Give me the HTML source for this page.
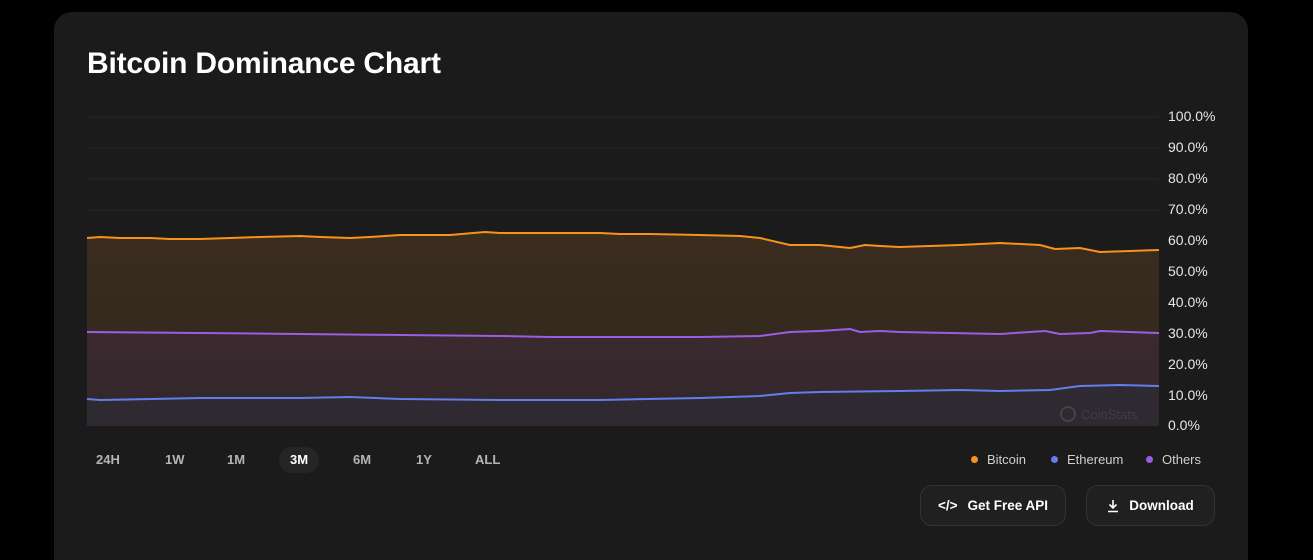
<!DOCTYPE html>
<html><head><meta charset="utf-8"><style>
html,body{margin:0;background:#000;width:1313px;height:560px;overflow:hidden;font-family:"Liberation Sans",sans-serif;}
.card{position:absolute;left:54px;top:12px;width:1194px;height:548px;background:#1b1b1b;border-radius:18px 18px 0 0;}
h1{position:absolute;left:87px;top:47px;margin:0;color:#fff;font-size:30px;font-weight:bold;letter-spacing:-0.2px;}
.yl{position:absolute;left:1168px;color:#e6e6e6;font-size:14px;}
.tf{position:absolute;top:452px;color:#b5b5b5;font-size:13px;font-weight:bold;}
.leg{position:absolute;top:452px;color:#cfcfcf;font-size:13px;}
.dot{display:inline-block;width:7px;height:7px;border-radius:50%;margin-right:9px;vertical-align:1px;}
.btn{position:absolute;top:485px;height:41px;border:1px solid #333;border-radius:12px;background:#202020;color:#fff;font-size:14px;font-weight:bold;display:flex;align-items:center;justify-content:center;box-sizing:border-box;}
</style></head><body>
<div class="card"></div>
<h1>Bitcoin Dominance Chart</h1>
<svg width="1313" height="560" style="position:absolute;left:0;top:0">
<defs>
<linearGradient id="gb" x1="0" y1="0" x2="0" y2="1"><stop offset="0" stop-color="#3a2d1e"/><stop offset="1" stop-color="#30261e"/></linearGradient>
<linearGradient id="go" x1="0" y1="0" x2="0" y2="1"><stop offset="0" stop-color="#3b2a2f"/><stop offset="1" stop-color="#32262b"/></linearGradient>
</defs>
<g stroke="#252525" stroke-width="1">
<line x1="87" y1="117" x2="1159" y2="117"/><line x1="87" y1="148" x2="1159" y2="148"/><line x1="87" y1="179" x2="1159" y2="179"/><line x1="87" y1="210" x2="1159" y2="210"/>
</g>
<polygon fill="url(#gb)" points="87,238 100,237 120,238 150,238 170,239 200,239 230,238 260,237 300,236 320,237 350,238 370,237 400,235 450,235 485,232 500,233 550,233 600,233 620,234 650,234 700,235 740,236 760,238 790,245 820,245 850,248 865,245 880,246 900,247 960,245 1000,243 1040,245 1055,249 1080,248 1100,252 1130,251 1159,250 1159,426 87,426"/>
<polygon fill="url(#go)" points="87,332 200,333 300,334 400,335 500,336 550,337 700,337 760,336 790,332 820,331 850,329 860,332 880,331 900,332 950,333 1000,334 1045,331 1060,334 1090,333 1100,331 1159,333 1159,426 87,426"/>
<polygon fill="#2f2a31" points="87,399 100,400 200,398 300,398 350,397 400,399 500,400 600,400 700,398 760,396 790,393 820,392 900,391 960,390 1000,391 1050,390 1080,386 1120,385 1159,386 1159,426 87,426"/>
<g stroke="#2c2c2c" stroke-width="1" opacity="0.6">
<line x1="87" y1="272" x2="1159" y2="272"/><line x1="87" y1="303" x2="1159" y2="303"/><line x1="87" y1="364" x2="1159" y2="364"/><line x1="87" y1="395" x2="1159" y2="395"/>
</g>
<g fill="none" stroke-width="2" stroke-linejoin="round">
<polyline stroke="#f7931a" points="87,238 100,237 120,238 150,238 170,239 200,239 230,238 260,237 300,236 320,237 350,238 370,237 400,235 450,235 485,232 500,233 550,233 600,233 620,234 650,234 700,235 740,236 760,238 790,245 820,245 850,248 865,245 880,246 900,247 960,245 1000,243 1040,245 1055,249 1080,248 1100,252 1130,251 1159,250"/>
<polyline stroke="#9b5de5" points="87,332 200,333 300,334 400,335 500,336 550,337 700,337 760,336 790,332 820,331 850,329 860,332 880,331 900,332 950,333 1000,334 1045,331 1060,334 1090,333 1100,331 1159,333"/>
<polyline stroke="#627eea" points="87,399 100,400 200,398 300,398 350,397 400,399 500,400 600,400 700,398 760,396 790,393 820,392 900,391 960,390 1000,391 1050,390 1080,386 1120,385 1159,386"/>
</g>
<circle cx="1068" cy="414" r="7" fill="none" stroke="#444" stroke-width="2"/>
<text x="1081" y="419" fill="#3e3e3e" font-size="13" font-family="Liberation Sans">CoinStats</text>
<rect x="279" y="447" width="40" height="26" rx="13" fill="#252525"/>
</svg>
<div class="yl" style="top:108px">100.0%</div><div class="yl" style="top:139px">90.0%</div><div class="yl" style="top:170px">80.0%</div><div class="yl" style="top:201px">70.0%</div><div class="yl" style="top:232px">60.0%</div><div class="yl" style="top:263px">50.0%</div><div class="yl" style="top:294px">40.0%</div><div class="yl" style="top:325px">30.0%</div><div class="yl" style="top:356px">20.0%</div><div class="yl" style="top:387px">10.0%</div><div class="yl" style="top:417px">0.0%</div>
<div class="tf" style="left:96px">24H</div><div class="tf" style="left:165px">1W</div><div class="tf" style="left:227px">1M</div><div class="tf" style="left:290px;color:#fff">3M</div><div class="tf" style="left:353px">6M</div><div class="tf" style="left:416px">1Y</div><div class="tf" style="left:475px">ALL</div>
<div class="leg" style="left:971px"><span class="dot" style="background:#f7931a"></span>Bitcoin</div>
<div class="leg" style="left:1051px"><span class="dot" style="background:#627eea"></span>Ethereum</div>
<div class="leg" style="left:1146px"><span class="dot" style="background:#9b5de5"></span>Others</div>
<div class="btn" style="left:920px;width:146px;font-size:13.5px"><span style="margin-right:10px">&lt;/&gt;</span>Get Free API</div>
<div class="btn" style="left:1086px;width:129px;font-size:13.5px"><svg width="12" height="14" style="margin-right:10px"><path d="M6 1v8M2.5 5.5L6 9l3.5-3.5M1 12.5h10" stroke="#fff" stroke-width="1.6" fill="none"/></svg>Download</div>
</body></html>
